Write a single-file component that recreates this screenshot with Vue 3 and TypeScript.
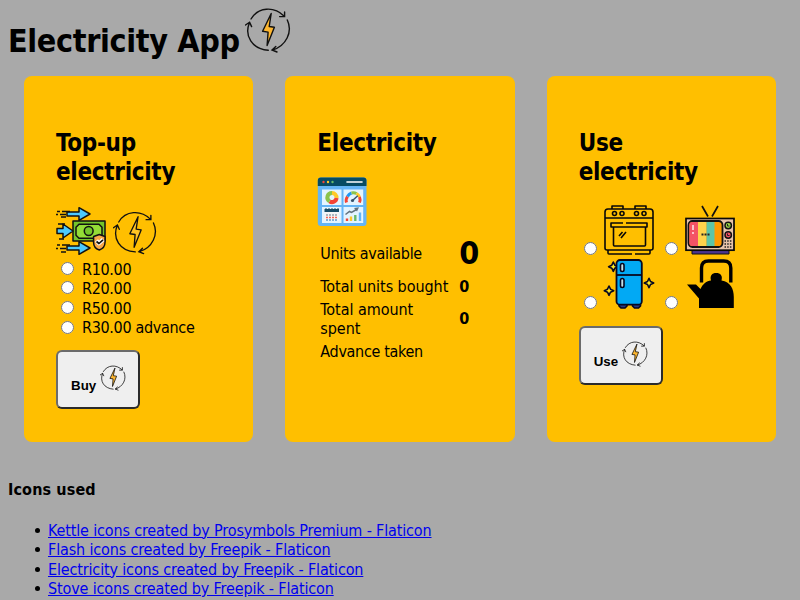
<script setup lang="ts">
import { defineComponent, h, ref } from 'vue'

interface Option { value: string; label: string }
interface Credit { text: string }

const topups: Option[] = [
  { value: '10', label: 'R10.00' },
  { value: '20', label: 'R20.00' },
  { value: '50', label: 'R50.00' },
  { value: 'advance', label: 'R30.00 advance' },
]
const credits: Credit[] = [
  { text: 'Kettle icons created by Prosymbols Premium - Flaticon' },
  { text: 'Flash icons created by Freepik - Flaticon' },
  { text: 'Electricity icons created by Freepik - Flaticon' },
  { text: 'Stove icons created by Freepik - Flaticon' },
]
const unitsAvailable = ref(0)
const unitsBought = ref(0)
const amountSpent = ref(0)

const FlashIcon = defineComponent({
  props: { fill: { type: String, default: '#fdb62f' } },
  setup(props) {
    return () =>
      h('svg', { viewBox: '5 8 46 45', fill: 'none', stroke: '#111', 'stroke-width': 1.4, 'stroke-linecap': 'round' }, [
        h('path', { d: 'M11 19C18 7 34 6 44 16M44.6 12v4.6h-5' }),
        h('path', { d: 'M47.3 20C53 32 46 46 32.5 50M35.8 46.4 32 50l5 2' }),
        h('path', { d: 'M28.3 50.3C12 49 4 36 9.5 22.5M5.5 25 9.6 22.2l2 4.4' }),
        h('path', { d: 'M31.2 13.5 22.6 31.3l5.5.8-1 13.4 7.3-18.2-5.2-.8z', fill: props.fill, 'stroke-linejoin': 'round' }),
      ])
  },
})
</script>

<template>
  <main class="page">
    <header class="title">
      <h1>Electricity App</h1>
      <FlashIcon class="flash-large" />
    </header>

    <div class="cards">
      <section class="card">
        <h2>Top-up<br />electricity</h2>
        <div class="icon-row">
          <svg class="icon" viewBox="0 0 50 50" stroke="#111" stroke-width="1.5" stroke-linejoin="round">
            <path d="M17 15h32v20H17z" fill="#75c52b" />
            <path d="M23 18.2h20l3 3v8l-3 3H23l-3-3v-8z" fill="#94dc36" />
            <circle cx="32.7" cy="25" r="4.4" fill="#75c52b" />
            <path d="M11 6h12V1.7L34 8 23 14.3V10H11z" fill="#4bcaff" />
            <path d="M1 22.5h6V18l10 7L7 32v-4.5H1z" fill="#4bcaff" />
            <path d="M11 40h12v-4.3L34 42l-11 6.3V44H11z" fill="#4bcaff" />
            <path d="M1 5.5h3m2 0h8M0 8.5h2m2 0h6M5 11h5M2 18h7M3 33h5M1 39h3m2 0h8M0 42.5h2m2 0h6M5 46h5" fill="none" />
            <path d="m43.3 28.5 5.7 2v6c0 4-3 6.5-5.7 7.5-3-1-5.7-3.5-5.7-7.5v-6z" fill="#f9a849" />
            <path d="m40.5 34.5 2.5 2.8 4.2-3.8" fill="none" stroke="#fff" stroke-width="4" />
            <path d="m40.5 35.5 2.5 2 4-3.7" fill="none" stroke-width="1.7" />
          </svg>
          <FlashIcon class="flash-medium" fill="#ffc423" />
        </div>
        <label v-for="option in topups" :key="option.value" class="option">
          <input type="radio" name="topup" :value="option.value" />
          <span>{{ option.label }}</span>
        </label>
        <button type="button">Buy <FlashIcon class="flash-small" /></button>
      </section>

      <section class="card">
        <h2>Electricity</h2>
        <svg class="icon dashboard" viewBox="0 0 50 50">
          <rect x=".8" y=".5" width="48.7" height="48.5" rx="3" fill="#64b5f6" />
          <path d="M.8 9V3.5a3 3 0 0 1 3-3h42.7a3 3 0 0 1 3 3V9z" fill="#064b63" />
          <circle cx="6.5" cy="5" r="1.2" fill="#f44336" /><circle cx="11" cy="5" r="1.2" fill="#ffca28" /><circle cx="15.5" cy="5" r="1.2" fill="#66bb6a" />
          <path d="M30 5h15" stroke="#fff" stroke-width="1.6" stroke-linecap="round" />
          <path d="M5 12.5h19.5v15.5H5zM26.5 12.5h19.7v15.5H26.5zM5 30h19.5v16H5zM26.5 30h19.7v16H26.5z" fill="#e3f4ff" />
          <g fill="none" stroke-width="4">
            <path d="M15 16a4.5 4.5 0 0 1 4.5 5" stroke="#ffc928" />
            <path d="M19.5 21a4.5 4.5 0 0 1-7 3.3" stroke="#f34336" />
            <path d="M12.5 24.3A4.5 4.5 0 0 1 15 16" stroke="#8bc34a" />
          </g>
          <g fill="none" stroke-width="3">
            <path d="M29.5 25.5a7 7 0 0 1 1-6" stroke="#f44336" />
            <path d="M30.5 19.5a7 7 0 0 1 4-3.5" stroke="#2196f3" />
            <path d="M34.5 16a7 7 0 0 1 5 .5" stroke="#8bc34a" />
            <path d="M39.5 16.5a7 7 0 0 1 3 3.5" stroke="#ffc928" />
            <path d="M42.5 20a7 7 0 0 1 0 5.5" stroke="#f44336" />
          </g>
          <path d="m35.5 23.5 5.3-4.8" stroke="#37526c" stroke-width="1.5" />
          <circle cx="35.5" cy="23.5" r="1.6" fill="#37526c" />
          <path d="M7.5 32h14.5v3H7.5z" fill="#174c66" /><path d="M7.5 35h14.5v9H7.5z" fill="#f5f5f5" />
          <path d="M9 31v3m3-3v3m3-3v3m3-3v3m3-3v3" stroke="#174c66" />
          <path d="M9 38h12" stroke="#94a4ad" stroke-width="1.5" stroke-dasharray="2 1" />
          <path d="M9 40.5h12" stroke="#f36557" stroke-width="1.5" stroke-dasharray="2 1" />
          <path d="M9 43h12" stroke="#5b9bd0" stroke-width="1.5" stroke-dasharray="2 1" />
          <path d="M30 44v-2.5" stroke="#f44336" stroke-width="2.4" /><path d="M34 44v-4.5" stroke="#ffc928" stroke-width="2.4" /><path d="M38.3 44v-6" stroke="#66bb6a" stroke-width="2.4" /><path d="M43 44v-8.5" stroke="#64b5f6" stroke-width="2.4" />
          <path d="m28.5 37.5 4-3 2 1 5-3" fill="none" stroke="#62727e" stroke-width="1.5" /><path d="m37 31 5-.8-2 4.3z" fill="#62727e" />
        </svg>
        <table>
          <tbody>
            <tr class="available"><td>Units available</td><td class="total big">{{ unitsAvailable }}</td></tr>
            <tr class="bought"><td class="wide">Total units bought</td><td class="total">{{ unitsBought }}</td></tr>
            <tr class="spent"><td class="wide">Total amount<br />spent</td><td class="total">{{ amountSpent }}</td></tr>
            <tr class="taken"><td>Advance taken</td><td></td></tr>
          </tbody>
        </table>
      </section>

      <section class="card">
        <h2>Use<br />electricity</h2>
        <div class="appliances">
          <label>
            <input type="radio" name="appliance" value="stove" />
            <svg class="icon" viewBox="0 0 50 50" fill="none" stroke="#080808" stroke-width="1.6" stroke-linejoin="round">
              <path d="M1 7q0-3 3-3h42q3 0 3 3v6H1zM8 4V1h11v3m12 0V1h11v3M1 13v30q0 2 2 2h44q2 0 2-2V13M4 45v3q0 1 1 1h23m3 0h14q1 0 1-1v-3" />
              <circle cx="10.5" cy="8.5" r="2" /><circle cx="18" cy="8.5" r="2" /><circle cx="32.5" cy="8.5" r="2" /><circle cx="40" cy="8.5" r="2" />
              <path d="M19 18H7v4h36v-4H22M9.5 22v18q0 1 1 1h30q1 0 1-1V22M15 31l3.5-4M17 33l5-6" />
            </svg>
          </label>
          <label>
            <input type="radio" name="appliance" value="tv" />
            <svg class="icon" viewBox="0 0 50 50">
              <path d="m17 1 6 10.5M33 1l-6 10.5" stroke="#111" stroke-width="1.7" />
              <path d="M7 45h37v4H7z" fill="#4a348e" stroke="#111" />
              <rect x="1" y="13.5" width="48" height="31.7" fill="#e8c3aa" stroke="#080808" stroke-width="1.7" />
              <rect x="3.5" y="16" width="34" height="26" rx="4" fill="#ff9900" stroke="#111" stroke-width="1.8" />
              <path d="M4.3 20q0-3 3-3H13v24H7.3q-3 0-3-3z" fill="#f45365" /><path d="M13 17h8.5v24H13z" fill="#ffd34b" /><path d="M21.5 17h8v24h-8z" fill="#5dc5a8" />
              <path d="M8 20v5m0 2v2" stroke="#fff" stroke-width="1.3" /><path d="M16.5 29.5h8" stroke="#222" stroke-width="1.8" stroke-dasharray="2 1" />
              <circle cx="43.2" cy="20.5" r="3.2" fill="#9bd548" stroke="#111" stroke-width="1.5" /><circle cx="43.2" cy="30" r="3.2" fill="#f45365" stroke="#111" stroke-width="1.5" />
              <path d="M42.5 19v2h2M42.5 28.5v2h2" fill="none" stroke="#222" /><path d="M39.5 36h8m-8 3h8m-8 3h8" stroke="#222" stroke-width="1.4" stroke-dasharray="1.5 1.2" />
            </svg>
          </label>
          <label>
            <input type="radio" name="appliance" value="fridge" />
            <svg class="icon" viewBox="0 0 50 50" stroke="#080820" stroke-width="1.6" stroke-linejoin="round">
              <path d="M15 44h8v3l-2 2h-4l-2-2zM28.5 44h8v3l-2 2h-4l-2-2z" fill="#283b87" />
              <path d="m9.3 3 1.5 3.2L14 7.7l-3.2 1.5-1.5 3.2-1.5-3.2-3.2-1.5 3.2-1.5zM5 27l1.5 3.2 3.2 1.5-3.2 1.5L5 36.4l-1.5-3.2-3.2-1.5 3.2-1.5zM45 19.3l1.5 3.2 3.2 1.5-3.2 1.5-1.5 3.2-1.5-3.2-3.2-1.5 3.2-1.5z" fill="#ffec24" />
              <rect x="12.5" y="1" width="25.3" height="44.7" rx="3.5" fill="#02a9f4" stroke-width="1.8" />
              <path d="M12.5 16h25.3" stroke-width="1.8" />
              <rect x="16.5" y="4.5" width="3.5" height="8" rx="1.7" fill="#c3e0e8" /><rect x="16.5" y="19.5" width="3.5" height="9" rx="1.7" fill="#c3e0e8" />
            </svg>
          </label>
          <label>
            <input type="radio" name="appliance" value="kettle" />
            <svg class="icon" viewBox="0 0 50 50">
              <path d="M16.5 23.5V9q0-7 7-7h15.3q7 0 7 7v14.5" fill="none" stroke="#000" stroke-width="3.4" />
              <path d="M2 25.5h9l4.5 4.5C17.8 25 21.5 22.2 26 21.6 24.7 16.5 27 14 31.2 14s6.7 2.5 5.3 7.6C45.5 23 48.8 30 48.8 38v11H14v-9.5z" fill="#000" />
            </svg>
          </label>
        </div>
        <button type="button">Use <FlashIcon class="flash-small" /></button>
      </section>
    </div>

    <footer>
      <h4>Icons used</h4>
      <ul>
        <li v-for="credit in credits" :key="credit.text"><a href="#">{{ credit.text }}</a></li>
      </ul>
    </footer>
  </main>
</template>

<style>
html { background: #a9a9a9; overflow: hidden; }
body { margin: 0; }
</style>

<style scoped>
.page { height: 600px; box-sizing: border-box; overflow: hidden; padding: 8px 8px 0; color: #000; background: #a9a9a9; font: 16px/19.5px "DejaVu Sans Condensed", "DejaVu Sans", sans-serif; font-stretch: condensed; letter-spacing: -.32px; }
h1, h2, h4 { margin: 0; font-weight: bold; white-space: nowrap; }
.title { height: 67.5px; display: flex; align-items: flex-start; }
h1 { width: 237px; padding-top: 14px; font-size: 32px; line-height: 39px; letter-spacing: -.34px; }
.flash-large { width: 46px; height: 45px; }
.cards { display: grid; grid-template-columns: repeat(3, 1fr); gap: 32px; margin: 0 16px; height: 366px; }
.card { min-width: 0; box-sizing: border-box; padding: 53.5px 32px 0; border-radius: 8px; background: #ffbf00; }
h2 { font-size: 24px; line-height: 29px; letter-spacing: -.3px; }
.icon { width: 50px; height: 50px; display: block; overflow: visible; }
.icon-row { height: 50px; margin: 18.5px 0 4px; display: flex; }
.flash-medium { width: 44px; height: 44px; margin: 5px 0 0 7px; }
.option { display: flex; align-items: center; height: 19.6px; white-space: nowrap; }
input { width: 13px; height: 13px; margin: 0; flex: none; }
.option input { margin: -2px 8px 0 5px; }
button { display: flex; align-items: flex-start; width: 84px; height: 59px; box-sizing: border-box; padding: 13px; border: 2px solid; border-color: #6b6b6b #2b2b2b #2b2b2b #6b6b6b; border-radius: 6px; background: #efefef; color: #000; font: bold 13.333px/42px "Liberation Sans", sans-serif; gap: 4px; letter-spacing: 0; white-space: nowrap; }
.option + button { margin-top: 12px; }
.flash-small { width: 26px; height: 26px; flex: none; }
.dashboard { margin: 18.5px 0 6px; }
table { width: 165px; border-collapse: collapse; table-layout: fixed; white-space: nowrap; }
td { padding: 0 0 0 3px; vertical-align: middle; }
td:first-child { width: 136px; }
.wide { letter-spacing: -.05px; }
.total { font-weight: bold; }
.big { font-size: 32px; }
.available { height: 43px; }
.bought { height: 22px; }
.spent { height: 43px; }
.taken { height: 23px; }
.appliances { display: grid; grid-template-columns: 81px 81px; grid-template-rows: 53.5px 53.5px; margin-top: 18px; margin-bottom: 14px; }
.appliances label { display: flex; }
.appliances input { margin: 37px 7.5px 0 5px; }
footer { padding-top: 38px; }
footer h4 { line-height: 20px; letter-spacing: .12px; }
ul { margin: 21px 0 0; padding: 0 0 0 26.5px; list-style: none; }
li { height: 19.5px; display: flex; align-items: center; gap: 8.5px; white-space: nowrap; letter-spacing: -.15px; }
li::before { content: ""; width: 5px; height: 5px; border-radius: 50%; background: #000; }
a { color: #0000ee; text-decoration: underline; }
</style>
